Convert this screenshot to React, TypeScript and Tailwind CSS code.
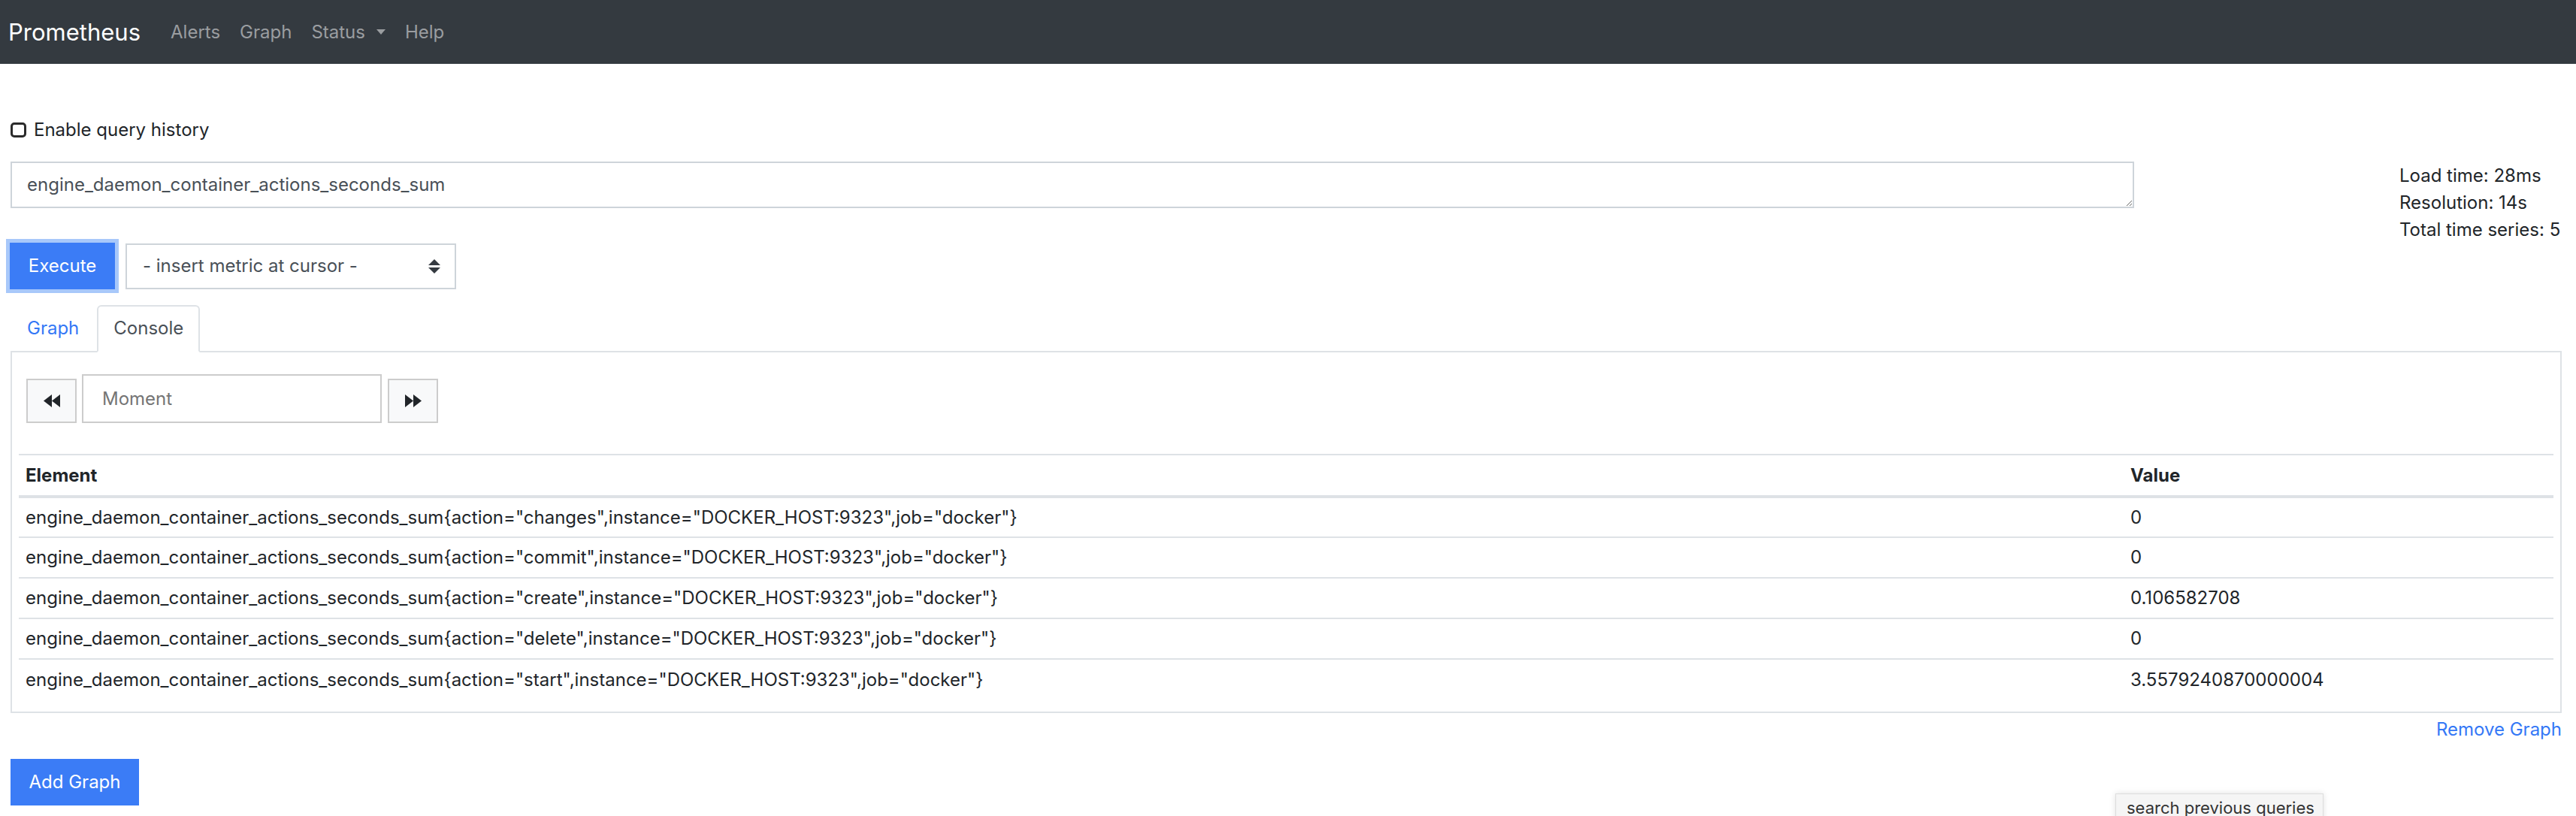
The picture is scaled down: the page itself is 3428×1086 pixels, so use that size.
import React from "react";

const rows = [
  { action: "changes", value: "0" },
  { action: "commit", value: "0" },
  { action: "create", value: "0.106582708" },
  { action: "delete", value: "0" },
  { action: "start", value: "3.5579240870000004" },
];

function Backward() {
  return (
    <svg width="22" height="17" viewBox="0 0 22 17" fill="#212529">
      <polygon points="11,0 0,8.5 11,17" />
      <polygon points="22,0 11,8.5 22,17" />
    </svg>
  );
}

function Forward() {
  return (
    <svg width="22" height="17" viewBox="0 0 22 17" fill="#212529">
      <polygon points="0,0 11,8.5 0,17" />
      <polygon points="11,0 22,8.5 11,17" />
    </svg>
  );
}

export default function App() {
  return (
    <div className="relative min-h-screen bg-white font-['Inter','Liberation_Sans',sans-serif] text-[24px] leading-[36px] text-[#212529]">
      {/* Navbar */}
      <nav className="h-[85px] bg-[#343a40] flex items-center">
        <span className="ml-[11px] mr-[27px] text-[31px] text-white">Prometheus</span>
        <a className="px-[13px] text-[#9a9da0]">Alerts</a>
        <a className="px-[13px] text-[#9a9da0]">Graph</a>
        <a className="px-[13px] text-[#9a9da0] flex items-center">
          Status
          <span className="ml-[15px] w-0 h-0 border-l-[6px] border-r-[6px] border-t-[7px] border-l-transparent border-r-transparent border-t-[#9a9da0]" />
        </a>
        <a className="px-[13px] text-[#9a9da0]">Help</a>
      </nav>

      <div className="pl-[14px] pr-[19px]">
        {/* Query history toggle */}
        <div className="mt-[70px] h-[36px] flex items-center gap-[10px]">
          <span className="w-[21px] h-[20px] border-[3px] border-[#2b2b2b] rounded-[5px]" />
          <span>Enable query history</span>
        </div>

        {/* Expression, execute, stats */}
        <div className="mt-[24px] flex items-start">
          <div className="w-[2826px]">
            <textarea
              rows={1}
              defaultValue="engine_daemon_container_actions_seconds_sum"
              className="block w-full h-[62px] border-2 border-[#ced4da] pl-[20px] pr-3 py-[11px] text-[#495057] leading-[36px] outline-none resize-y overflow-hidden"
            />
            <div className="mt-[46px] flex items-center gap-[14px]">
              <button className="w-[140px] h-[62px] bg-[#3b7cf6] text-white ring-[5px] ring-[#a8c8fa] ml-[-1px]">
                Execute
              </button>
              <div className="w-[440px] h-[61px] border-2 border-[#ced4da] flex items-center justify-between pl-[21px] pr-[19px] text-[#495057]">
                <span>- insert metric at cursor -</span>
                <svg width="16" height="19" viewBox="0 0 16 19" fill="#343a40">
                  <polygon points="8,0 16,8 0,8" />
                  <polygon points="0,11 16,11 8,19" />
                </svg>
              </div>
            </div>
          </div>
          <div className="ml-auto mt-[1px] w-[216px] whitespace-nowrap">
            <div>Load time: 28ms</div>
            <div>Resolution: 14s</div>
            <div>Total time series: 5</div>
          </div>
        </div>

        {/* Tabs */}
        <div className="mt-[21px] flex border-b-2 border-[#dee2e6]">
          <div className="border-2 border-transparent px-[20px] pt-[11px] pb-[12px] text-[#3478f6] -mb-[2px]">Graph</div>
          <div className="ml-[2px] border-2 border-[#dee2e6] border-b-white rounded-t-[6px] px-[20px] pt-[11px] pb-[12px] text-[#495057] -mb-[2px] bg-white">
            Console
          </div>
        </div>

        {/* Console panel */}
        <div className="border-2 border-t-0 border-[#dee2e6] px-[9px] pt-[29px] pb-[16px]">
          <div className="ml-[10px] flex items-end">
            <button className="w-[67px] h-[59px] bg-[#f8f9fa] border-2 border-[#cccccc] flex items-center justify-center">
              <Backward />
            </button>
            <div className="ml-[7px] w-[399px] h-[65px] border-2 border-[#cccccc] flex items-center pl-[25px] text-[#757575]">
              Moment
            </div>
            <button className="ml-[8px] w-[67px] h-[59px] bg-[#f8f9fa] border-2 border-[#cccccc] flex items-center justify-center">
              <Forward />
            </button>
          </div>

          <table className="mt-[41px] w-full border-collapse">
            <thead>
              <tr>
                <th className="w-[2801px] text-left font-bold border-t-2 border-b-4 border-[#dee2e6] h-[56px] px-[9px]">Element</th>
                <th className="text-left font-bold border-t-2 border-b-4 border-[#dee2e6] h-[56px] px-[9px]">Value</th>
              </tr>
            </thead>
            <tbody>
              {rows.map((r) => (
                <tr key={r.action}>
                  <td className="border-t-2 border-[#dee2e6] h-[54px] px-[9px] whitespace-nowrap">
                    engine_daemon_container_actions_seconds_sum{"{"}action="{r.action}",instance="DOCKER_HOST:9323",job="docker"{"}"}
                  </td>
                  <td className="border-t-2 border-[#dee2e6] h-[54px] px-[9px]">{r.value}</td>
                </tr>
              ))}
            </tbody>
          </table>
        </div>

        <div className="mt-[4px] text-right text-[#3478f6]">Remove Graph</div>

        <button className="mt-[21px] w-[171px] h-[62px] bg-[#3b7cf6] text-white">Add Graph</button>
      </div>

      {/* Browser autocomplete hint */}
      <div className="absolute left-[2815px] top-[1056px] w-[277px] h-[50px] bg-[#f5f5f5] border border-[#dddddd] shadow-[0_0_8px_rgba(0,0,0,0.12)] pl-[14px] pt-[2px] text-[22px] leading-[32px] text-[#333333]">
        search previous queries
      </div>
    </div>
  );
}
